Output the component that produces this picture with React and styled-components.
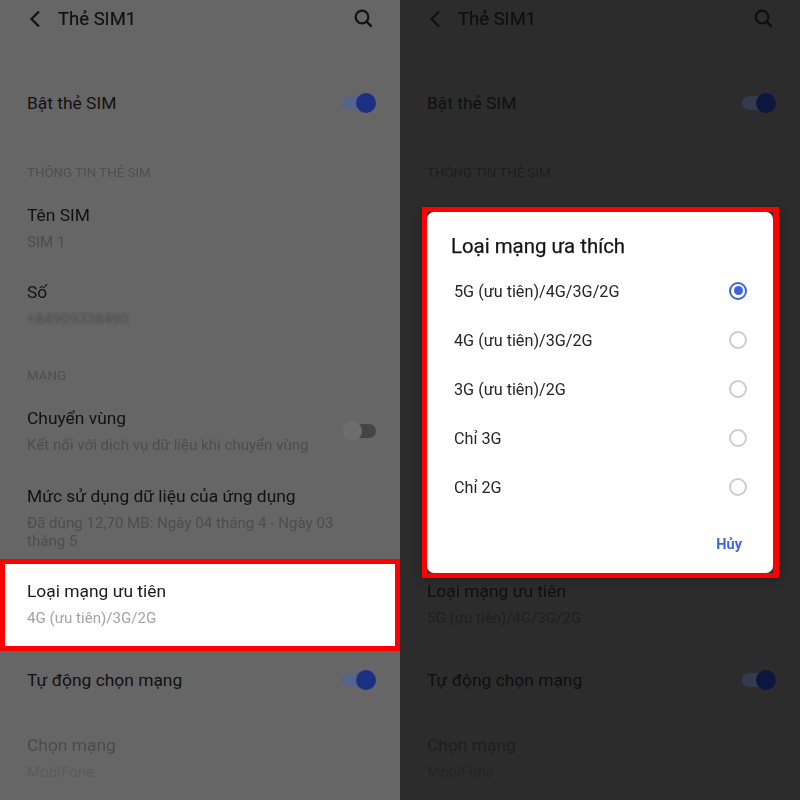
import React from 'react'
import styled, { createGlobalStyle, css } from 'styled-components'

const GlobalStyle = createGlobalStyle`
  html, body {
    margin: 0;
    padding: 0;
    background: #666;
  }
  * {
    box-sizing: border-box;
  }
`

const light = {
  bg: '#666666',
  line: '#696969',
  title: '#111111',
  sub: '#4d4d4d',
  section: '#4f4f4f',
  muted: '#4b4b4b',
  faint: '#5b5b5b',
  trackOn: '#56648c',
  thumbOn: '#1a3082',
  trackOff: '#454545',
  thumbOff: '#6d6d6d',
}

const dim = {
  bg: '#2c2c2c',
  line: '#2e2e2e',
  title: '#0f0f0f',
  sub: '#1f1f1f',
  section: '#1e1e1e',
  muted: '#1e1e1e',
  faint: '#252525',
  trackOn: '#353a4c',
  thumbOn: '#0c1740',
  trackOff: '#252525',
  thumbOff: '#333333',
}

const Page = styled.div`
  width: 800px;
  height: 800px;
  display: grid;
  grid-template-columns: 400px 400px;
  overflow: hidden;
  font-family: Roboto, 'Noto Sans', sans-serif;
`
const Screen = styled.div`
  position: relative;
  height: 800px;
  overflow: hidden;
  background: ${(p) => p.$c.bg};
`
const Header = styled.header`
  height: 54px;
  padding: 0 27px 16px 29px;
  display: flex;
  align-items: center;
  border-bottom: 1px solid ${(p) => p.$c.line};
`
const HeaderTitle = styled.h1`
  margin: 0 0 0 17px;
  flex: 1;
  font-size: 18.5px;
  line-height: 22px;
  font-weight: 400;
  color: ${(p) => p.$c.title};
  -webkit-text-stroke: 0.2px ${(p) => p.$c.title};
  filter: blur(0.35px);
`
const Row = styled.div`
  margin-top: ${(p) => p.$top}px;
  padding: 0 24px 0 27px;
  display: flex;
  align-items: center;
  justify-content: space-between;
  ${(p) =>
    p.$picked &&
    css`
      height: 92px;
      padding: 16px 5px 0 22px;
      align-items: flex-start;
      background: #fff;
      border: 5px solid #ff0000;
    `}
`
const Texts = styled.div`
  display: flex;
  flex-direction: column;
  gap: 7px;
  filter: blur(0.35px);
`
const Title = styled.div`
  font-size: 17.4px;
  line-height: 22px;
  color: ${(p) => (p.$picked ? '#1a1a1a' : p.$off ? p.$c.muted : p.$c.title)};
`
const Sub = styled.div`
  font-size: 15.1px;
  line-height: 18px;
  color: ${(p) => (p.$picked ? '#a3a3a3' : p.$off ? p.$c.faint : p.$c.sub)};
  ${(p) =>
    p.$blurred &&
    css`
      filter: blur(1.6px);
    `}
`
const Section = styled.div`
  margin-top: ${(p) => p.$top}px;
  padding-left: 27px;
  font-size: 13.3px;
  line-height: 18px;
  color: ${(p) => p.$c.section};
  filter: blur(0.35px);
`
const Toggle = styled.div`
  position: relative;
  flex: none;
  width: 34px;
  height: 20px;
  display: flex;
  align-items: center;
  justify-content: ${(p) => (p.$on ? 'flex-end' : 'flex-start')};
  &::before {
    content: '';
    position: absolute;
    left: 0;
    right: 0;
    top: 3px;
    height: 14px;
    border-radius: 7px;
    background: ${(p) => (p.$on ? p.$c.trackOn : p.$c.trackOff)};
  }
`
const Thumb = styled.span`
  position: relative;
  width: 20px;
  height: 20px;
  border-radius: 50%;
  background: ${(p) => (p.$on ? p.$c.thumbOn : p.$c.thumbOff)};
`
const DialogFrame = styled.div`
  position: absolute;
  left: 22px;
  top: 207px;
  width: 357px;
  height: 371px;
  border: 5px solid #ff0000;
  border-right-width: 6px;
  background: #2c2c2c;
  box-shadow: 0 2px 10px rgba(0, 0, 0, 0.25);
`
const Dialog = styled.div`
  width: 100%;
  height: 100%;
  padding: 22px 24px 0;
  background: #fff;
  border-radius: 7px;
  display: flex;
  flex-direction: column;
`
const DialogTitle = styled.h2`
  margin: 0 0 8px;
  font-size: 20.4px;
  line-height: 24px;
  font-weight: 400;
  color: #141414;
  -webkit-text-stroke: 0.25px #141414;
  filter: blur(0.3px);
`
const OptionRow = styled.div`
  height: 49px;
  padding: 0 2px 0 3px;
  display: flex;
  align-items: center;
  justify-content: space-between;
`
const OptionLabel = styled.span`
  padding-top: 2px;
  font-size: 16.2px;
  color: #262626;
  filter: blur(0.3px);
`
const Radio = styled.span`
  width: 18px;
  height: 18px;
  border-radius: 50%;
  display: flex;
  align-items: center;
  justify-content: center;
  border: 2px solid ${(p) => (p.$checked ? '#3e64dc' : '#cccccc')};
  &::after {
    content: '';
    display: ${(p) => (p.$checked ? 'block' : 'none')};
    width: 9px;
    height: 9px;
    border-radius: 50%;
    background: #3e64dc;
  }
`
const DialogFooter = styled.div`
  margin-top: 24px;
  display: flex;
  justify-content: flex-end;
  padding-right: 7px;
`
const CancelButton = styled.button`
  padding: 0;
  border: 0;
  background: none;
  font-family: inherit;
  font-size: 14.5px;
  line-height: 20px;
  font-weight: 700;
  color: #3f66d8;
  filter: blur(0.25px);
`

const BackIcon = ({ color }) => (
  <svg width="12" height="18" viewBox="0 0 12 18" fill="none">
    <path d="M10 1.5 2.5 9l7.5 7.5" stroke={color} strokeWidth="2.2" />
  </svg>
)

const SearchIcon = ({ color }) => (
  <svg width="19" height="19" viewBox="0 0 19 19" fill="none">
    <circle cx="8" cy="8" r="6.3" stroke={color} strokeWidth="2.2" />
    <path d="M12.6 12.6 17.6 17.6" stroke={color} strokeWidth="2.4" />
  </svg>
)

const options = [
  '5G (ưu tiên)/4G/3G/2G',
  '4G (ưu tiên)/3G/2G',
  '3G (ưu tiên)/2G',
  'Chỉ 3G',
  'Chỉ 2G',
]

function Settings({ c, picked, networkType, children }) {
  return (
    <Screen $c={c}>
      <Header $c={c}>
        <BackIcon color={c.title} />
        <HeaderTitle $c={c}>Thẻ SIM1</HeaderTitle>
        <SearchIcon color={c.title} />
      </Header>
      <Row $top={38}>
        <Title $c={c}>Bật thẻ SIM</Title>
        <Toggle $c={c} $on>
          <Thumb $c={c} $on />
        </Toggle>
      </Row>
      <Section $c={c} $top={50}>
        THÔNG TIN THẺ SIM
      </Section>
      <Row $top={22}>
        <Texts>
          <Title $c={c}>Tên SIM</Title>
          <Sub $c={c}>SIM 1</Sub>
        </Texts>
      </Row>
      <Row $top={30}>
        <Texts>
          <Title $c={c}>Số</Title>
          <Sub $c={c} $blurred>
            +84909338490
          </Sub>
        </Texts>
      </Row>
      <Section $c={c} $top={39}>
        MẠNG
      </Section>
      <Row $top={22}>
        <Texts>
          <Title $c={c}>Chuyển vùng</Title>
          <Sub $c={c}>Kết nối với dịch vụ dữ liệu khi chuyển vùng</Sub>
        </Texts>
        <Toggle $c={c}>
          <Thumb $c={c} />
        </Toggle>
      </Row>
      <Row $top={31}>
        <Texts>
          <Title $c={c}>Mức sử dụng dữ liệu của ứng dụng</Title>
          <Sub $c={c}>
            Đã dùng 12,70 MB: Ngày 04 tháng 4 - Ngày 03
            <br />
            tháng 5
          </Sub>
        </Texts>
      </Row>
      {picked ? (
        <Row $top={9} $picked>
          <Texts>
            <Title $c={c} $picked>
              Loại mạng ưu tiên
            </Title>
            <Sub $c={c} $picked>
              {networkType}
            </Sub>
          </Texts>
        </Row>
      ) : (
        <Row $top={30}>
          <Texts>
            <Title $c={c}>Loại mạng ưu tiên</Title>
            <Sub $c={c}>{networkType}</Sub>
          </Texts>
        </Row>
      )}
      <Row $top={picked ? 18 : 42}>
        <Title $c={c}>Tự động chọn mạng</Title>
        <Toggle $c={c} $on>
          <Thumb $c={c} $on />
        </Toggle>
      </Row>
      <Row $top={43}>
        <Texts>
          <Title $c={c} $off>
            Chọn mạng
          </Title>
          <Sub $c={c} $off>
            MobiFone
          </Sub>
        </Texts>
      </Row>
      {children}
    </Screen>
  )
}

function App() {
  return (
    <Page>
      <GlobalStyle />
      <Settings c={light} picked networkType="4G (ưu tiên)/3G/2G" />
      <Settings c={dim} networkType="5G (ưu tiên)/4G/3G/2G">
        <DialogFrame>
          <Dialog>
            <DialogTitle>Loại mạng ưa thích</DialogTitle>
            {options.map((label, i) => (
              <OptionRow key={label}>
                <OptionLabel>{label}</OptionLabel>
                <Radio $checked={i === 0} />
              </OptionRow>
            ))}
            <DialogFooter>
              <CancelButton>Hủy</CancelButton>
            </DialogFooter>
          </Dialog>
        </DialogFrame>
      </Settings>
    </Page>
  )
}

export default App
